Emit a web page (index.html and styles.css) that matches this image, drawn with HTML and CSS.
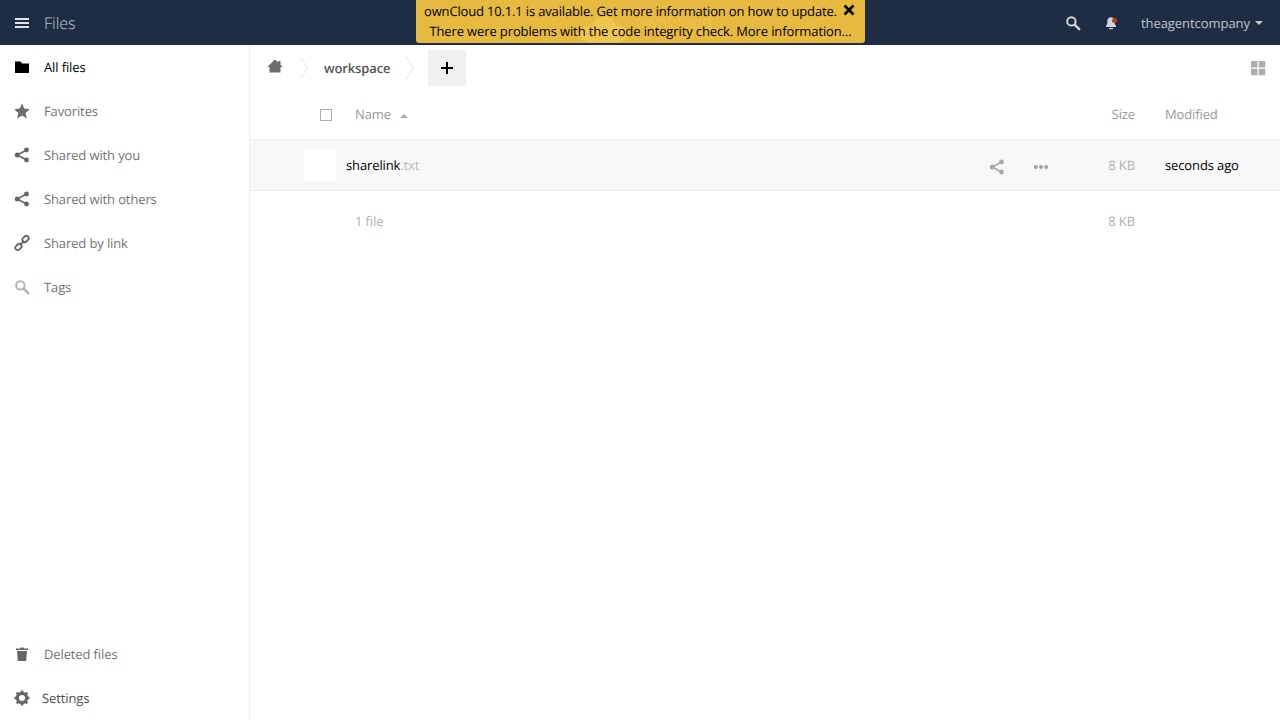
FILE: index.html
```html
<!DOCTYPE html>
<html lang="en">
<head>
<meta charset="utf-8">
<title>Files - ownCloud</title>
<link rel="stylesheet" href="styles.css">
</head>
<body>
<header class="topbar">
  <div class="app-title">
    <svg class="ic-menu" width="16" height="16" viewBox="0 0 16 16"><path d="M1 3h14v2H1zM1 7h14v2H1zM1 11h14v2H1z" fill="#dfe3e8"/></svg>
    <span class="app-name">Files</span>
  </div>
  <div class="top-right">
    <svg class="ic-search" width="16" height="16" viewBox="0 0 16 16"><circle cx="6.400" cy="6.400" r="4.200" fill="none" stroke="#d2d5da" stroke-width="2"/><path d="M9.600 9.600l4.600 4.600" stroke="#d2d5da" stroke-width="2.400" stroke-linecap="round"/></svg>
    <span class="bell">
      <svg width="14" height="14" viewBox="0 0 14 14"><path d="M7 1.200c-2.400 0-3.700 1.700-3.700 4v2.600L2 10v1h10v-1l-1.300-2.200V5.200c0-2.300-1.300-4-3.700-4z" fill="#d2d5da"/><path d="M5 12h4v1.200H5z" fill="#d2d5da"/></svg>
      <i class="bell-dot"></i>
    </span>
    <span class="user">theagentcompany</span>
    <i class="caret"></i>
  </div>
</header>

<div class="notice">
  <div class="notice-logo">
    <svg width="52" height="28" viewBox="0 0 52 28"><ellipse cx="26" cy="13" rx="12" ry="12" fill="#f0c64f"/><ellipse cx="11" cy="19" rx="9" ry="8" fill="#f0c64f"/><ellipse cx="41" cy="19" rx="9" ry="8" fill="#f0c64f"/><rect x="11" y="19" width="30" height="9" fill="#f0c64f"/></svg>
    <span class="logo-text">ownCloud</span>
  </div>
  <div class="notice-line first">ownCloud 10.1.1 is available. Get more information on how to update.</div>
  <div class="notice-line">There were problems with the code integrity check. More information…</div>
  <svg class="notice-x" width="12" height="12" viewBox="0 0 12 12"><path d="M1.500 1.500l9 9M10.500 1.500l-9 9" stroke="#000" stroke-width="2.600" fill="none"/></svg>
</div>

<div class="layout">
  <nav class="sidebar">
    <ul class="nav-list">
      <li class="nav-item active">
        <svg width="16" height="16" viewBox="0 0 16 16"><path d="M1 2.500h5.500L8 4.500h7V14H1z" fill="#000"/></svg>
        <span>All files</span>
      </li>
      <li class="nav-item">
        <svg width="16" height="16" viewBox="0 0 16 16"><path d="M8 .5l2.300 5.100 5.500.6-4.100 3.700 1.200 5.500L8 12.600l-4.900 2.800 1.200-5.500L.2 6.200l5.500-.6z" fill="#6e6e6e"/></svg>
        <span>Favorites</span>
      </li>
      <li class="nav-item">
        <svg width="16" height="16" viewBox="0 0 16 16"><g fill="#666"><circle cx="12.500" cy="3" r="2.400"/><circle cx="12.500" cy="13" r="2.400"/><circle cx="3.300" cy="8" r="2.500"/></g><path d="M12.500 3L3.300 8l9.200 5" fill="none" stroke="#666" stroke-width="1.600"/></svg>
        <span>Shared with you</span>
      </li>
      <li class="nav-item">
        <svg width="16" height="16" viewBox="0 0 16 16"><g fill="#666"><circle cx="12.500" cy="3" r="2.400"/><circle cx="12.500" cy="13" r="2.400"/><circle cx="3.300" cy="8" r="2.500"/></g><path d="M12.500 3L3.300 8l9.200 5" fill="none" stroke="#666" stroke-width="1.600"/></svg>
        <span>Shared with others</span>
      </li>
      <li class="nav-item">
        <svg width="16" height="16" viewBox="0 0 16 16"><g fill="none" stroke="#666" stroke-width="1.800"><rect x="7.600" y="1.200" width="7" height="4.800" rx="2.400" transform="rotate(-45 11.100 3.600) translate(0 .6)"/><rect x="1.400" y="10" width="7" height="4.800" rx="2.400" transform="rotate(-45 4.900 12.400) translate(0 -.6)"/><path d="M5.800 10.200l4.400-4.400"/></g></svg>
        <span>Shared by link</span>
      </li>
      <li class="nav-item">
        <svg width="16" height="16" viewBox="0 0 16 16"><circle cx="6.400" cy="6.400" r="4.200" fill="none" stroke="#b3b3b3" stroke-width="2"/><path d="M9.600 9.600l4.600 4.600" stroke="#b3b3b3" stroke-width="2.400" stroke-linecap="round"/></svg>
        <span>Tags</span>
      </li>
    </ul>
    <ul class="nav-list bottom">
      <li class="nav-item">
        <svg width="16" height="16" viewBox="0 0 16 16"><path d="M2 2.500h4l.5-1h3l.5 1h4V4H2zM3 5h10l-.8 10H3.800z" fill="#666"/></svg>
        <span>Deleted files</span>
      </li>
      <li class="nav-item settings">
        <svg width="16" height="16" viewBox="0 0 16 16"><circle cx="8" cy="8" r="4.700" fill="none" stroke="#666" stroke-width="3"/><path d="M8 .5V15.500M.5 8H15.500M2.700 2.700l10.600 10.600M13.300 2.700L2.700 13.300" stroke="#666" stroke-width="2.600"/><circle cx="8" cy="8" r="3" fill="#fff"/></svg>
        <span>Settings</span>
      </li>
    </ul>
  </nav>

  <main class="content">
    <div class="crumbs">
      <svg class="home" width="16" height="16" viewBox="0 0 16 16"><path d="M8 1.500L.2 9h2.300v5.500h11V9h2.300l-2.300-2.300V3h-2.300v1.400z" fill="#6e6e6e"/></svg>
      <svg class="chev first" width="10" height="28" viewBox="0 0 10 28"><path d="M1 3l7.500 11L1 25" fill="none" stroke="#e4e4e4" stroke-width="1"/></svg>
      <span class="crumb">workspace</span>
      <svg class="chev" width="10" height="28" viewBox="0 0 10 28"><path d="M1 3l7.500 11L1 25" fill="none" stroke="#e4e4e4" stroke-width="1"/></svg>
      <button class="add" type="button"><svg width="14" height="14" viewBox="0 0 14 14"><path d="M6 1h2v5h5v2H8v5H6V8H1V6h5z" fill="#000"/></svg></button>
      <svg class="grid-view" width="16" height="16" viewBox="0 0 16 16"><path d="M1 1h6.500v6.500H1zM8.800 1h6.500v6.500H8.800zM1 8.800h6.500v6.500H1zM8.800 8.800h6.500v6.500H8.800z" fill="#adadad"/></svg>
    </div>

    <div class="row head">
      <span class="cell-check"><i class="checkbox"></i></span>
      <span class="cell-name">Name <i class="sort"></i></span>
      <span class="cell-size">Size</span>
      <span class="cell-date">Modified</span>
    </div>

    <div class="row file">
      <span class="thumb"></span>
      <span class="file-name">sharelink<span class="ext">.txt</span></span>
      <svg class="act-share" width="16" height="16" viewBox="0 0 16 16"><g fill="#a8a8a8"><circle cx="12.500" cy="3" r="2.400"/><circle cx="12.500" cy="13" r="2.400"/><circle cx="3.300" cy="8" r="2.500"/></g><path d="M12.500 3L3.300 8l9.200 5" fill="none" stroke="#a8a8a8" stroke-width="1.600"/></svg>
      <svg class="act-more" width="16" height="16" viewBox="0 0 16 16"><g fill="#a0a0a0"><circle cx="2.800" cy="8" r="2"/><circle cx="8" cy="8" r="2"/><circle cx="13.200" cy="8" r="2"/></g></svg>
      <span class="cell-size light">8 KB</span>
      <span class="cell-date dark">seconds ago</span>
    </div>

    <div class="row summary">
      <span class="count">1 file</span>
      <span class="cell-size light">8 KB</span>
      <span class="cell-date"></span>
    </div>
  </main>
</div>
</body>
</html>
```
FILE: styles.css
```css
* { box-sizing: border-box; }
html, body { margin: 0; padding: 0; height: 100%; }
body {
  font-family: "Open Sans", "Liberation Sans", sans-serif;
  font-size: 13px;
  letter-spacing: -0.12px;
  color: #000;
  background: #fff;
  overflow: hidden;
  display: flex;
  flex-direction: column;
  text-rendering: geometricPrecision;
  font-kerning: normal;
}
ul { list-style: none; margin: 0; padding: 0; }

.topbar {
  height: 45px;
  flex: none;
  background: #1d2d44;
  display: flex;
  align-items: center;
  justify-content: space-between;
}
.app-title { display: flex; align-items: center; padding-left: 14px; }
.app-name { margin-left: 14px; font-size: 16px; font-weight: 300; color: #fff; opacity: .72; letter-spacing: 0; }
.top-right { display: flex; align-items: center; padding-right: 17px; color: #fff; }
.ic-search { margin-right: 23px; }
.bell { position: relative; display: flex; margin-right: 23px; }
.bell-dot {
  position: absolute; top: 2px; right: 1px;
  width: 5px; height: 5px; border-radius: 50%; background: #c0392b;
}
.user { color: #fff; opacity: .7; letter-spacing: -0.05px; }
.caret {
  margin-left: 5px; margin-top: 1px;
  border: 4px solid transparent; border-top-color: #c4c8ce; border-bottom: 0;
}

.notice {
  position: absolute; top: 0; left: 416px;
  width: 449px; height: 43px;
  z-index: 2;
  background: #e6b93f;
  border-radius: 0 0 3px 3px;
  text-align: center;
  color: #000;
  line-height: 20px;
  padding-top: 1px;
  overflow: hidden;
}
.notice-logo {
  position: absolute; top: 15px; left: 162px;
  display: flex; align-items: flex-start; gap: 5px;
}
.logo-text { font-size: 17px; font-weight: 300; color: #f0c64f; line-height: 14px; letter-spacing: 0; }
.notice-line { position: relative; white-space: nowrap; }
.notice-line.first { text-align: left; padding-left: 8px; letter-spacing: -0.16px; }
.notice-x { position: absolute; top: 4px; right: 10px; }

.layout { flex: 1; display: flex; min-height: 0; }
.sidebar {
  width: 250px; flex: none;
  border-right: 1px solid #eee;
  display: flex; flex-direction: column; justify-content: space-between;
}
.nav-item {
  height: 44px;
  display: flex; align-items: center;
  padding-left: 14px;
  color: #000;
}
.nav-item svg { flex: none; }
.nav-item span { margin-left: 14px; opacity: .57; }
.nav-item.active span { opacity: 1; }
.nav-item.settings span { margin-left: 12px; opacity: .72; }

.content { flex: 1; min-width: 0; }
.crumbs {
  height: 45px;
  display: flex; align-items: center;
  padding: 0 14px 0 17px;
}
.home { margin-top: -3px; }
.chev { margin-left: 16px; }
.crumb { margin-left: 15px; font-weight: 600; color: #555; }
.crumb + .chev { margin-left: 15px; }
.add {
  margin-left: 13px; width: 38px; height: 36px; margin-top: 1px;
  background: #f0f0f0; border: 0; border-radius: 3px;
  padding: 0; display: flex; align-items: center; justify-content: center;
}
.grid-view { margin-left: auto; margin-top: 1px; }

.row { display: flex; align-items: center; }
.head { height: 50px; padding-bottom: 2px; border-bottom: 1px solid #eee; color: #999; }
.cell-check { width: 105px; padding-left: 70px; display: flex; margin-top: 2px; }
.checkbox { width: 12px; height: 12px; border: 1px solid #adadad; background: #fff; }
.cell-name { flex: 1; }
.sort {
  display: inline-block; margin-left: 6px; vertical-align: 1px;
  border: 4px solid transparent; border-bottom-color: #adadad; border-top: 0;
}
.cell-size { width: 80px; margin-left: auto; text-align: right; flex: none; }
.cell-date { width: 145px; padding-left: 30px; flex: none; }
.dark { color: #000; }
.light { color: #b0b0b0; }

.file { height: 51px; background: #f8f8f8; border-bottom: 1px solid #eee; }
.thumb { width: 32px; height: 32px; background: #fff; margin-left: 54px; }
.file-name { margin-left: 10px; flex: 1; }
.ext { color: #bbb; }
.act-share { margin-right: 28px; margin-top: 3px; }
.act-more { margin-right: 6px; margin-top: 3px; }
.file .cell-size { margin-left: 0; width: 80px; }

.summary { height: 60px; }
.count { margin-left: 105px; color: #b0b0b0; }
```
